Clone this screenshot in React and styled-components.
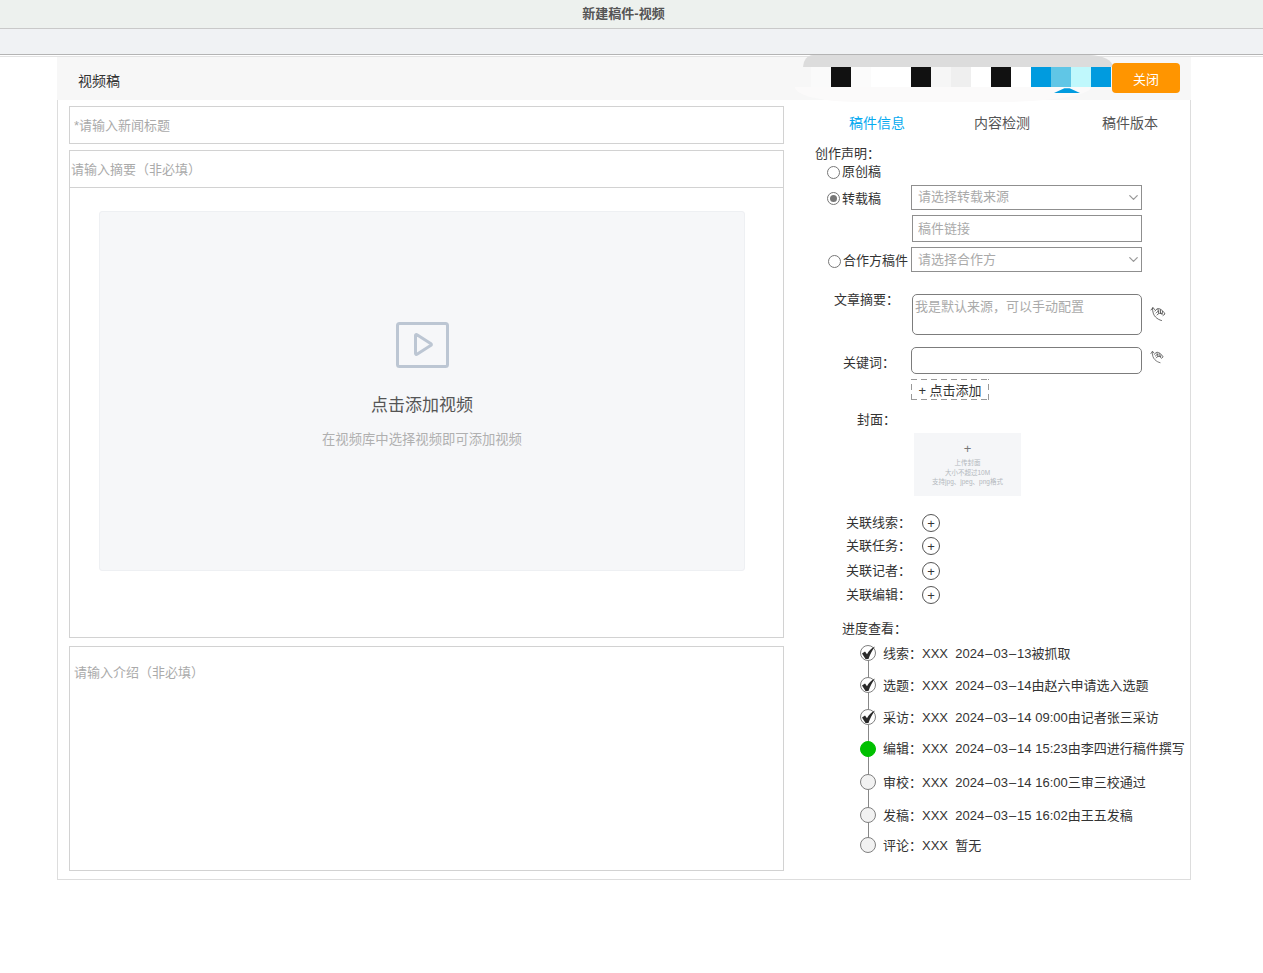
import React from 'react';
import styled, { createGlobalStyle } from 'styled-components';
import { ChevronDown } from 'lucide-react';

const GlobalStyle = createGlobalStyle`
  html, body { margin: 0; padding: 0; background: #fff; }
  body {
    font-family: "Liberation Sans", "Noto Sans CJK SC", sans-serif;
    font-size: 13px;
    color: #333;
  }
  * { box-sizing: border-box; }
  input::placeholder, textarea::placeholder { color: #aaa; opacity: 1; }
`;

const TitleBar = styled.div`
  height: 29px;
  padding: 0 16px 4px 0;
  background: #edf1ee;
  border-bottom: 1px solid #c9c9c9;
  display: flex;
  align-items: center;
  justify-content: center;
  font-size: 13px;
  font-weight: 700;
  color: #555;
`;

const ToolBar = styled.div`
  height: 26px;
  background: #f0f2f4;
  border-bottom: 1px solid #b4b4b4;
`;

const Page = styled.div`
  margin-top: 1px;
  border-top: 1px solid #e2e2e2;
  height: 917px;
`;

const Sheet = styled.div`
  width: 1134px;
  height: 823px;
  margin-left: 57px;
  border: 1px solid #ddd;
  border-top: 0;
`;

const Header = styled.div`
  position: relative;
  height: 43px;
  margin: 0 -1px;
  padding: 14px 0 0 21px;
  background: #f7f7f7;
  font-size: 14px;
  line-height: 20px;
  color: #333;
`;

const CloseButton = styled.button`
  position: absolute;
  top: 6px;
  left: 1055px;
  width: 68px;
  height: 30px;
  border: 0;
  border-radius: 4px;
  background: #ff9500;
  color: #fff;
  font: 13px "Liberation Sans", "Noto Sans CJK SC", sans-serif;
`;

/* the mosaic that hides part of the header */
const Smudge = styled.div`
  position: absolute;
  top: 30px;
  left: 738px;
  width: 296px;
  height: 15px;
  background: #fbfafa;
  border-radius: 0 0 90px 60px / 0 0 15px 15px;
`;

const GreyCap = styled.div`
  position: absolute;
  top: -2px;
  left: 746px;
  width: 310px;
  height: 12px;
  background: #dcdcdc;
  border-radius: 10px 24px 0 0 / 12px 12px 0 0;
`;

const Mosaic = styled.div`
  position: absolute;
  top: 10px;
  left: 754px;
  display: flex;
`;

const Tile = styled.div`
  width: 20px;
  height: 20px;
  background: ${p => p.$color};
`;

const BlueTip = styled.div`
  position: absolute;
  top: 30px;
  left: 997px;
  width: 26px;
  height: 6px;
  background: #009bdf;
  clip-path: polygon(0 100%, 40% 20%, 60% 20%, 100% 100%);
`;

const Body = styled.div`
  display: flex;
`;

const LeftColumn = styled.div`
  width: 727px;
  padding: 6px 0 0 11px;
  flex-shrink: 0;
`;

const TitleInput = styled.input`
  display: block;
  width: 715px;
  height: 38px;
  padding: 0 4px;
  border: 1px solid #d2d2d2;
  outline: 0;
  font: 13px "Liberation Sans", "Noto Sans CJK SC", sans-serif;
`;

const VideoBox = styled.div`
  width: 715px;
  height: 488px;
  margin-top: 6px;
  border: 1px solid #d2d2d2;
`;

const SummaryInput = styled.input`
  display: block;
  width: 100%;
  height: 37px;
  padding: 0 1px;
  border: 0;
  border-bottom: 1px solid #d2d2d2;
  outline: 0;
  font: 13px "Liberation Sans", "Noto Sans CJK SC", sans-serif;
`;

const VideoPanel = styled.div`
  width: 646px;
  height: 360px;
  margin: 23px 0 0 29px;
  padding-bottom: 11px;
  background: #f6f7f9;
  border: 1px solid #eef0f3;
  border-radius: 3px;
  display: flex;
  flex-direction: column;
  align-items: center;
  justify-content: center;
`;

const VideoTitle = styled.div`
  margin-top: 24px;
  font-size: 17px;
  line-height: 28px;
  color: #555;
`;

const VideoHint = styled.div`
  margin-top: 10px;
  font-size: 13.33px;
  line-height: 20px;
  color: #b0b0b0;
`;

const IntroInput = styled.textarea`
  display: block;
  width: 715px;
  height: 225px;
  margin-top: 8px;
  padding: 17px 4px;
  border: 1px solid #d2d2d2;
  outline: 0;
  resize: none;
  font: 13px/18px "Liberation Sans", "Noto Sans CJK SC", sans-serif;
`;

const RightColumn = styled.div`
  flex: 1;
`;

const Tabs = styled.div`
  display: flex;
  height: 20px;
  margin-top: 13px;
  padding-left: 64px;
`;

const Tab = styled.div`
  margin-left: ${p => p.$gap || 0}px;
  font-size: 14px;
  line-height: 20px;
  color: ${p => (p.$active ? '#06aaf0' : '#555')};
`;

const PlainLabel = styled.div`
  height: 18px;
  margin-top: ${p => p.$top || 0}px;
  padding-left: ${p => p.$left}px;
  line-height: 18px;
  color: #333;
`;

const FormRow = styled.div`
  display: grid;
  grid-template-columns: 126px 231px;
  align-items: center;
  height: ${p => p.$height}px;
  margin-top: ${p => p.$top || 0}px;
`;

const RadioLabel = styled.div`
  display: flex;
  align-items: center;
  gap: 2px;
  padding-left: ${p => p.$left || 42}px;
  padding-top: ${p => p.$drop || 0}px;
  white-space: nowrap;
  line-height: 18px;
`;

const RadioMark = styled.span`
  width: 13px;
  height: 13px;
  border: 1px solid #777;
  border-radius: 50%;
  background: #fff;
  display: flex;
  align-items: center;
  justify-content: center;
  flex-shrink: 0;
  &::after {
    content: '';
    display: ${p => (p.$checked ? 'block' : 'none')};
    width: 7px;
    height: 7px;
    border-radius: 50%;
    background: #777;
  }
`;

const SelectWrap = styled.div`
  position: relative;
  width: 231px;
  height: 25px;
  svg {
    position: absolute;
    top: 5px;
    right: 1px;
    pointer-events: none;
  }
`;

const SelectField = styled.select`
  appearance: none;
  display: block;
  width: 231px;
  height: 25px;
  padding: 0 6px ${p => p.$lift || 0}px;
  border: 1px solid #8f8f8f;
  border-radius: 0;
  background: #fff;
  outline: 0;
  color: #aaa;
  font: 13px "Liberation Sans", "Noto Sans CJK SC", sans-serif;
`;

const LinkInput = styled.input`
  width: 230px;
  height: 27px;
  margin-left: 1px;
  padding: 0 5px;
  border: 1px solid #8f8f8f;
  outline: 0;
  font: 13px "Liberation Sans", "Noto Sans CJK SC", sans-serif;
`;

const LabelledRow = styled.div`
  display: flex;
  height: ${p => p.$height}px;
  margin-top: ${p => p.$top}px;
`;

const RowLabel = styled.div`
  width: ${p => p.$width}px;
  padding-left: ${p => p.$left}px;
  margin-top: ${p => p.$pad}px;
  line-height: 18px;
  white-space: nowrap;
  flex-shrink: 0;
`;

const ManualText = styled.textarea`
  width: 230px;
  height: 41px;
  padding: 3px 2px;
  border: 1px solid #7c7c7c;
  border-radius: 5px;
  outline: 0;
  resize: none;
  font: 13px/18px "Liberation Sans", "Noto Sans CJK SC", sans-serif;
`;

const KeywordInput = styled.input`
  width: 231px;
  height: 27px;
  border: 1px solid #7c7c7c;
  border-radius: 5px;
  outline: 0;
`;

const HandWrap = styled.span`
  margin: ${p => p.$top}px 0 0 8px;
  height: 16px;
  line-height: 0;
`;

const AddTag = styled.div`
  width: 78px;
  height: 21px;
  margin: 5px 0 0 126px;
  text-align: center;
  line-height: 23px;
  color: #333;
  background:
    repeating-linear-gradient(90deg, #999 0 6px, transparent 6px 10px) 0 0 / 100% 1px no-repeat,
    repeating-linear-gradient(90deg, #999 0 6px, transparent 6px 10px) 0 100% / 100% 1px no-repeat,
    repeating-linear-gradient(0deg, #999 0 6px, transparent 6px 10px) 0 0 / 1px 100% no-repeat,
    repeating-linear-gradient(0deg, #999 0 6px, transparent 6px 10px) 100% 0 / 1px 100% no-repeat;
`;

const CoverBox = styled.div`
  width: 107px;
  height: 63px;
  margin: 4px 0 0 129px;
  padding-top: 8px;
  background: #f5f6f8;
  display: flex;
  flex-direction: column;
  align-items: center;
  color: #b4b9be;
  font-size: 6.5px;
  line-height: 9.500px;
  white-space: nowrap;
`;

const CoverPlus = styled.div`
  height: 15px;
  margin-bottom: 2px;
  font-size: 13px;
  line-height: 15px;
  color: #777;
`;

const LinkList = styled.div`
  margin-top: 15px;
`;

const LinkRow = styled.div`
  display: flex;
  align-items: center;
  height: ${p => p.$height}px;
  padding-left: 61px;
`;

const LinkName = styled.div`
  width: 76px;
  line-height: 18px;
`;

const PlusCircle = styled.div`
  width: 18px;
  height: 18px;
  border: 1px solid #555;
  border-radius: 50%;
  display: flex;
  align-items: center;
  justify-content: center;
  font-size: 13px;
  line-height: 1;
  color: #333;
`;

const Timeline = styled.div`
  margin-top: -1px;
  padding-left: 75px;
`;

const Step = styled.div`
  position: relative;
  display: flex;
  align-items: center;
  gap: 7px;
  height: ${p => p.$height}px;
  &:not(:first-child)::before,
  &:not(:last-child)::after {
    content: '';
    position: absolute;
    left: 8px;
    width: 1px;
    height: 50%;
    background: #888;
  }
  &::before { top: 0; }
  &::after { top: 50%; }
`;

const StepText = styled.span`
  padding-bottom: 2px;
  white-space: pre;
`;

const Dash = styled.span`
  padding: 0 1px;
`;

const Dot = styled.span`
  position: relative;
  z-index: 1;
  width: 16px;
  height: 16px;
  border-radius: 50%;
  border: 1px solid ${p => (p.$state === 'active' ? '#00c000' : '#808080')};
  background: ${p => ({ active: '#00c000', done: '#fff', todo: '#f2f2f2' })[p.$state]};
  line-height: 0;
  flex-shrink: 0;
`;

const tiles = ['#fafafa', '#111', '#fbfbfb', '#fff', '#fff', '#111', '#f6f6f6', '#efefef', '#fff', '#111', '#fff', '#009bdf', '#60c6e6', '#c0f8fc', '#009bdf'];

const links = [
  { name: '关联线索：', h: 24 },
  { name: '关联任务：', h: 22 },
  { name: '关联记者：', h: 28 },
  { name: '关联编辑：', h: 20 },
];

const steps = [
  { h: 32, state: 'done', text: '线索：XXX  2024–03–13被抓取' },
  { h: 32, state: 'done', text: '选题：XXX  2024–03–14由赵六申请选入选题' },
  { h: 32, state: 'done', text: '采访：XXX  2024–03–14 09:00由记者张三采访' },
  { h: 31, state: 'active', text: '编辑：XXX  2024–03–14 15:23由李四进行稿件撰写' },
  { h: 36, state: 'todo', text: '审校：XXX  2024–03–14 16:00三审三校通过' },
  { h: 30, state: 'todo', text: '发稿：XXX  2024–03–15 16:02由王五发稿' },
  { h: 30, state: 'todo', text: '评论：XXX  暂无' },
];

function VideoIcon() {
  return (
    <svg width="53" height="46" viewBox="0 0 53 46" fill="none" stroke="#bcc6d3" strokeWidth="3">
      <rect x="1.5" y="1.5" width="50" height="43" rx="2" />
      <path d="M19.5 13.5v18a1 1 0 0 0 1.5.8l14-9a1 1 0 0 0 0-1.6l-14-9a1 1 0 0 0-1.5.8z" strokeLinejoin="round" />
    </svg>
  );
}

function HandIcon({ size }) {
  return (
    <svg width={size} height={size} viewBox="0 0 16 16" fill="none" stroke="#444" strokeWidth="0.8" strokeLinecap="round">
      <path d="M1 4l2-2.500 1.500 2M2.500 2c0 4 1 7 3 9s4 3 6 3.500" />
      <path d="M5 5c1-2 3-3 5-2s4 3 5 5l-2 1.500M6 7c1-1 2-2 3-2M7 9c1-1.500 3-2.500 5-1.500" />
      <path d="M8 3l.5 4M10.500 4l0 3.500M12.500 5.500l-.5 3" />
    </svg>
  );
}

function CheckMark() {
  return (
    <svg width="14" height="14" viewBox="0 0 14 14">
      <path d="M1 7.500L4 5.500l2 2.700C7.500 5 10 2.500 14 .5 11.500 4 9 8 7.500 13H4.500z" fill="#2a2a2a" />
    </svg>
  );
}

function renderStep(text) {
  return text.split('–').map((part, i) => (
    <React.Fragment key={i}>
      {i > 0 && <Dash>–</Dash>}
      {part}
    </React.Fragment>
  ));
}

function Select({ label, lift }) {
  return (
    <SelectWrap>
      <SelectField defaultValue="" $lift={lift}>
        <option value="">{label}</option>
      </SelectField>
      <ChevronDown size={15} color="#999" strokeWidth={2} />
    </SelectWrap>
  );
}

export default function App() {
  return (
    <>
      <GlobalStyle />
      <TitleBar>新建稿件-视频</TitleBar>
      <ToolBar />
      <Page>
        <Sheet>
          <Header>
            视频稿
            <Smudge />
            <GreyCap />
            <Mosaic>
              {tiles.map((color, i) => (
                <Tile key={i} $color={color} />
              ))}
            </Mosaic>
            <BlueTip />
            <CloseButton>关闭</CloseButton>
          </Header>
          <Body>
            <LeftColumn>
              <TitleInput placeholder="*请输入新闻标题" />
              <VideoBox>
                <SummaryInput placeholder="请输入摘要（非必填）" />
                <VideoPanel>
                  <VideoIcon />
                  <VideoTitle>点击添加视频</VideoTitle>
                  <VideoHint>在视频库中选择视频即可添加视频</VideoHint>
                </VideoPanel>
              </VideoBox>
              <IntroInput placeholder="请输入介绍（非必填）" />
            </LeftColumn>
            <RightColumn>
              <Tabs>
                <Tab $active>稿件信息</Tab>
                <Tab $gap={69}>内容检测</Tab>
                <Tab $gap={72}>稿件版本</Tab>
              </Tabs>
              <PlainLabel $top={12} $left={30}>创作声明：</PlainLabel>
              <FormRow $height={18}>
                <RadioLabel><RadioMark />原创稿</RadioLabel>
              </FormRow>
              <FormRow $height={25} $top={4}>
                <RadioLabel $drop={2}><RadioMark $checked />转载稿</RadioLabel>
                <Select label="请选择转载来源" lift={2} />
              </FormRow>
              <FormRow $height={27} $top={5}>
                <span />
                <LinkInput placeholder="稿件链接" />
              </FormRow>
              <FormRow $height={25} $top={5}>
                <RadioLabel $left={43} $drop={3}><RadioMark />合作方稿件</RadioLabel>
                <Select label="请选择合作方" />
              </FormRow>
              <LabelledRow $height={41} $top={22}>
                <RowLabel $width={127} $left={49} $pad={-3}>文章摘要：</RowLabel>
                <ManualText placeholder="我是默认来源，可以手动配置" />
                <HandWrap $top={12}><HandIcon size={16} /></HandWrap>
              </LabelledRow>
              <LabelledRow $height={27} $top={12}>
                <RowLabel $width={126} $left={58} $pad={7}>关键词：</RowLabel>
                <KeywordInput />
                <HandWrap $top={3}><HandIcon size={14} /></HandWrap>
              </LabelledRow>
              <AddTag>+ 点击添加</AddTag>
              <PlainLabel $top={11} $left={72}>封面：</PlainLabel>
              <CoverBox>
                <CoverPlus>+</CoverPlus>
                <div>上传封面</div>
                <div>大小不超过10M</div>
                <div>支持jpg、jpeg、png格式</div>
              </CoverBox>
              <LinkList>
                {links.map(link => (
                  <LinkRow key={link.name} $height={link.h}>
                    <LinkName>{link.name}</LinkName>
                    <PlusCircle>+</PlusCircle>
                  </LinkRow>
                ))}
              </LinkList>
              <PlainLabel $top={15} $left={57}>进度查看：</PlainLabel>
              <Timeline>
                {steps.map(step => (
                  <Step key={step.text} $height={step.h}>
                    <Dot $state={step.state}>{step.state === 'done' && <CheckMark />}</Dot>
                    <StepText>{renderStep(step.text)}</StepText>
                  </Step>
                ))}
              </Timeline>
            </RightColumn>
          </Body>
        </Sheet>
      </Page>
    </>
  );
}
